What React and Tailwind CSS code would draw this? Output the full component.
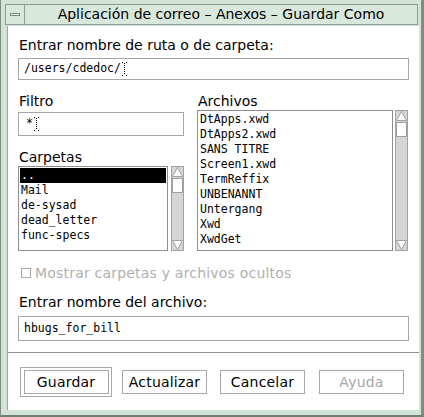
import React from 'react';

const sans = { fontFamily: '"DejaVu Sans", "Liberation Sans", sans-serif' };
const mono = { fontFamily: '"DejaVu Sans Mono", "Liberation Mono", monospace' };

const archivos = [
  'DtApps.xwd',
  'DtApps2.xwd',
  'SANS TITRE',
  'Screen1.xwd',
  'TermReffix',
  'UNBENANNT',
  'Untergang',
  'Xwd',
  'XwdGet',
];

const carpetas = ['..', 'Mail', 'de-sysad', 'dead_letter', 'func-specs'];

// cursor en pointillé (I-beam)
const Cursor = () => (
  <svg width="5" height="14" viewBox="0 0 5 14" className="ml-[1px]">
    <g fill="#000">
      <rect x="0" y="0" width="1" height="1" />
      <rect x="4" y="0" width="1" height="1" />
      <rect x="2" y="1" width="1" height="1" />
      <rect x="2" y="3" width="1" height="1" />
      <rect x="2" y="5" width="1" height="1" />
      <rect x="2" y="7" width="1" height="1" />
      <rect x="2" y="9" width="1" height="1" />
      <rect x="2" y="11" width="1" height="1" />
      <rect x="0" y="13" width="1" height="1" />
      <rect x="4" y="13" width="1" height="1" />
    </g>
  </svg>
);

const Scrollbar = ({ className = '' }) => (
  <div className={`w-[13px] bg-[#d6d6d6] border border-[#a2a2a2] flex flex-col justify-between items-center ${className}`}>
    <div className="flex flex-col items-center">
      <svg width="11" height="10" viewBox="0 0 11 10">
        <polygon points="5.5,0.5 10.5,9.5 0.5,9.5" fill="#fff" stroke="#a0a0a0" />
      </svg>
      <div className="w-[11px] h-[15px] bg-white border border-[#a0a0a0] mt-[1px]" />
    </div>
    <svg width="11" height="10" viewBox="0 0 11 10">
      <polygon points="0.5,0.5 10.5,0.5 5.5,9.5" fill="#fff" stroke="#a0a0a0" />
    </svg>
  </div>
);

const Label = ({ children, className = '' }) => (
  <div className={`text-[14px] leading-[16px] text-black ${className}`} style={sans}>
    {children}
  </div>
);

const Button = ({ children, disabled }) => (
  <div
    className={`w-[85px] h-[24px] bg-white border border-[#a8a8a8] flex items-center justify-center text-[14px] tracking-[0.2px] ${disabled ? 'text-[#a6a6a6]' : 'text-black'}`}
    style={sans}
  >
    {children}
  </div>
);

export default function App() {
  return (
    <div className="w-[424px] h-[417px] bg-[#d4e3d7] border-l border-[#7d8d82] border-r-[3px] border-b-[2px] border-r-[#7d8d82] border-b-[#6f7f74] flex flex-col overflow-hidden">
      {/* barre de titre */}
      <div className="mt-[4px] ml-[4px] mr-[3px] h-[21px] bg-[#d9e8dc] border border-[#8c9c91] flex">
        <div className="w-[19px] border-r border-[#8c9c91] flex items-center justify-center">
          <div className="w-[10px] h-[3px] border border-[#7c8c81] bg-[#e6f0e8]" />
        </div>
        <div className="flex-1 flex items-center justify-center text-[14px] text-black" style={sans}>
          Aplicación de correo – Anexos – Guardar Como
        </div>
      </div>

      {/* contenu */}
      <div className="ml-[6px] mr-[2px] mt-[1px] flex-1 bg-white border-l border-[#9aaa9f] flex flex-col mb-[5px]">
        <div className="px-[10px] pt-[11px]">
          <Label className="pl-[1px]">Entrar nombre de ruta o de carpeta:</Label>
          <div className="mt-[5px] h-[22px] border border-[#a6a6a6] flex items-center pl-[5px] text-[11.5px]" style={mono}>
            /users/cdedoc/
            <Cursor />
          </div>

          <div className="mt-[13px] flex">
            {/* colonne gauche */}
            <div className="w-[166px] flex flex-col">
              <Label className="pl-[1px]">Filtro</Label>
              <div className="mt-[3px] h-[24px] border border-[#a6a6a6] flex items-center pl-[7px] text-[11.5px]" style={mono}>
                *
                <Cursor />
              </div>
              <Label className="mt-[13px] pl-[1px]">Carpetas</Label>
              <div className="mt-[1px] h-[85px] flex">
                <div className="w-[151px] border border-[#8e8e8e] pt-[1px] px-[1px] text-[11.5px] leading-[15px]" style={mono}>
                  {carpetas.map((c, i) => (
                    <div key={c} className={i === 0 ? 'bg-black text-white pl-[1px]' : 'pl-[1px] text-black'}>
                      {c}
                    </div>
                  ))}
                </div>
                <Scrollbar className="ml-[3px] h-[85px]" />
              </div>
            </div>

            {/* colonne droite */}
            <div className="ml-[13px] flex-1 flex flex-col">
              <Label className="pl-[1px]">Archivos</Label>
              <div className="mt-[1px] h-[141px] flex">
                <div className="w-[196px] border border-[#8e8e8e] pt-[1px] pl-[2px] text-[11.5px] leading-[15px] text-black" style={mono}>
                  {archivos.map((a) => (
                    <div key={a}>{a}</div>
                  ))}
                </div>
                <Scrollbar className="ml-[2px] h-[141px]" />
              </div>
            </div>
          </div>

          <div className="mt-[14px] h-[16px] flex items-center pl-[3px]">
            <div className="w-[10px] h-[10px] border border-[#a8a8a8]" />
            <span className="ml-[4px] text-[14px] tracking-[0.2px] text-[#b0b0b0]" style={sans}>
              Mostrar carpetas y archivos ocultos
            </span>
          </div>

          <Label className="mt-[13px] pl-[1px]">Entrar nombre del archivo:</Label>
          <div className="mt-[6px] h-[25px] border border-[#a6a6a6] flex items-center pl-[5px] text-[11.5px] text-black" style={mono}>
            hbugs_for_bill
          </div>
        </div>

        <div className="mt-[11px] h-[1px] bg-[#8e8e8e]" />

        <div className="mt-[14px] pl-[12px] flex items-center">
          <div className="w-[92px] h-[30px] border border-[#a8a8a8] flex items-center justify-center">
            <Button>Guardar</Button>
          </div>
          <div className="ml-[10px]">
            <Button>Actualizar</Button>
          </div>
          <div className="ml-[13px]">
            <Button>Cancelar</Button>
          </div>
          <div className="ml-[14px]">
            <Button disabled>Ayuda</Button>
          </div>
        </div>
      </div>
    </div>
  );
}
